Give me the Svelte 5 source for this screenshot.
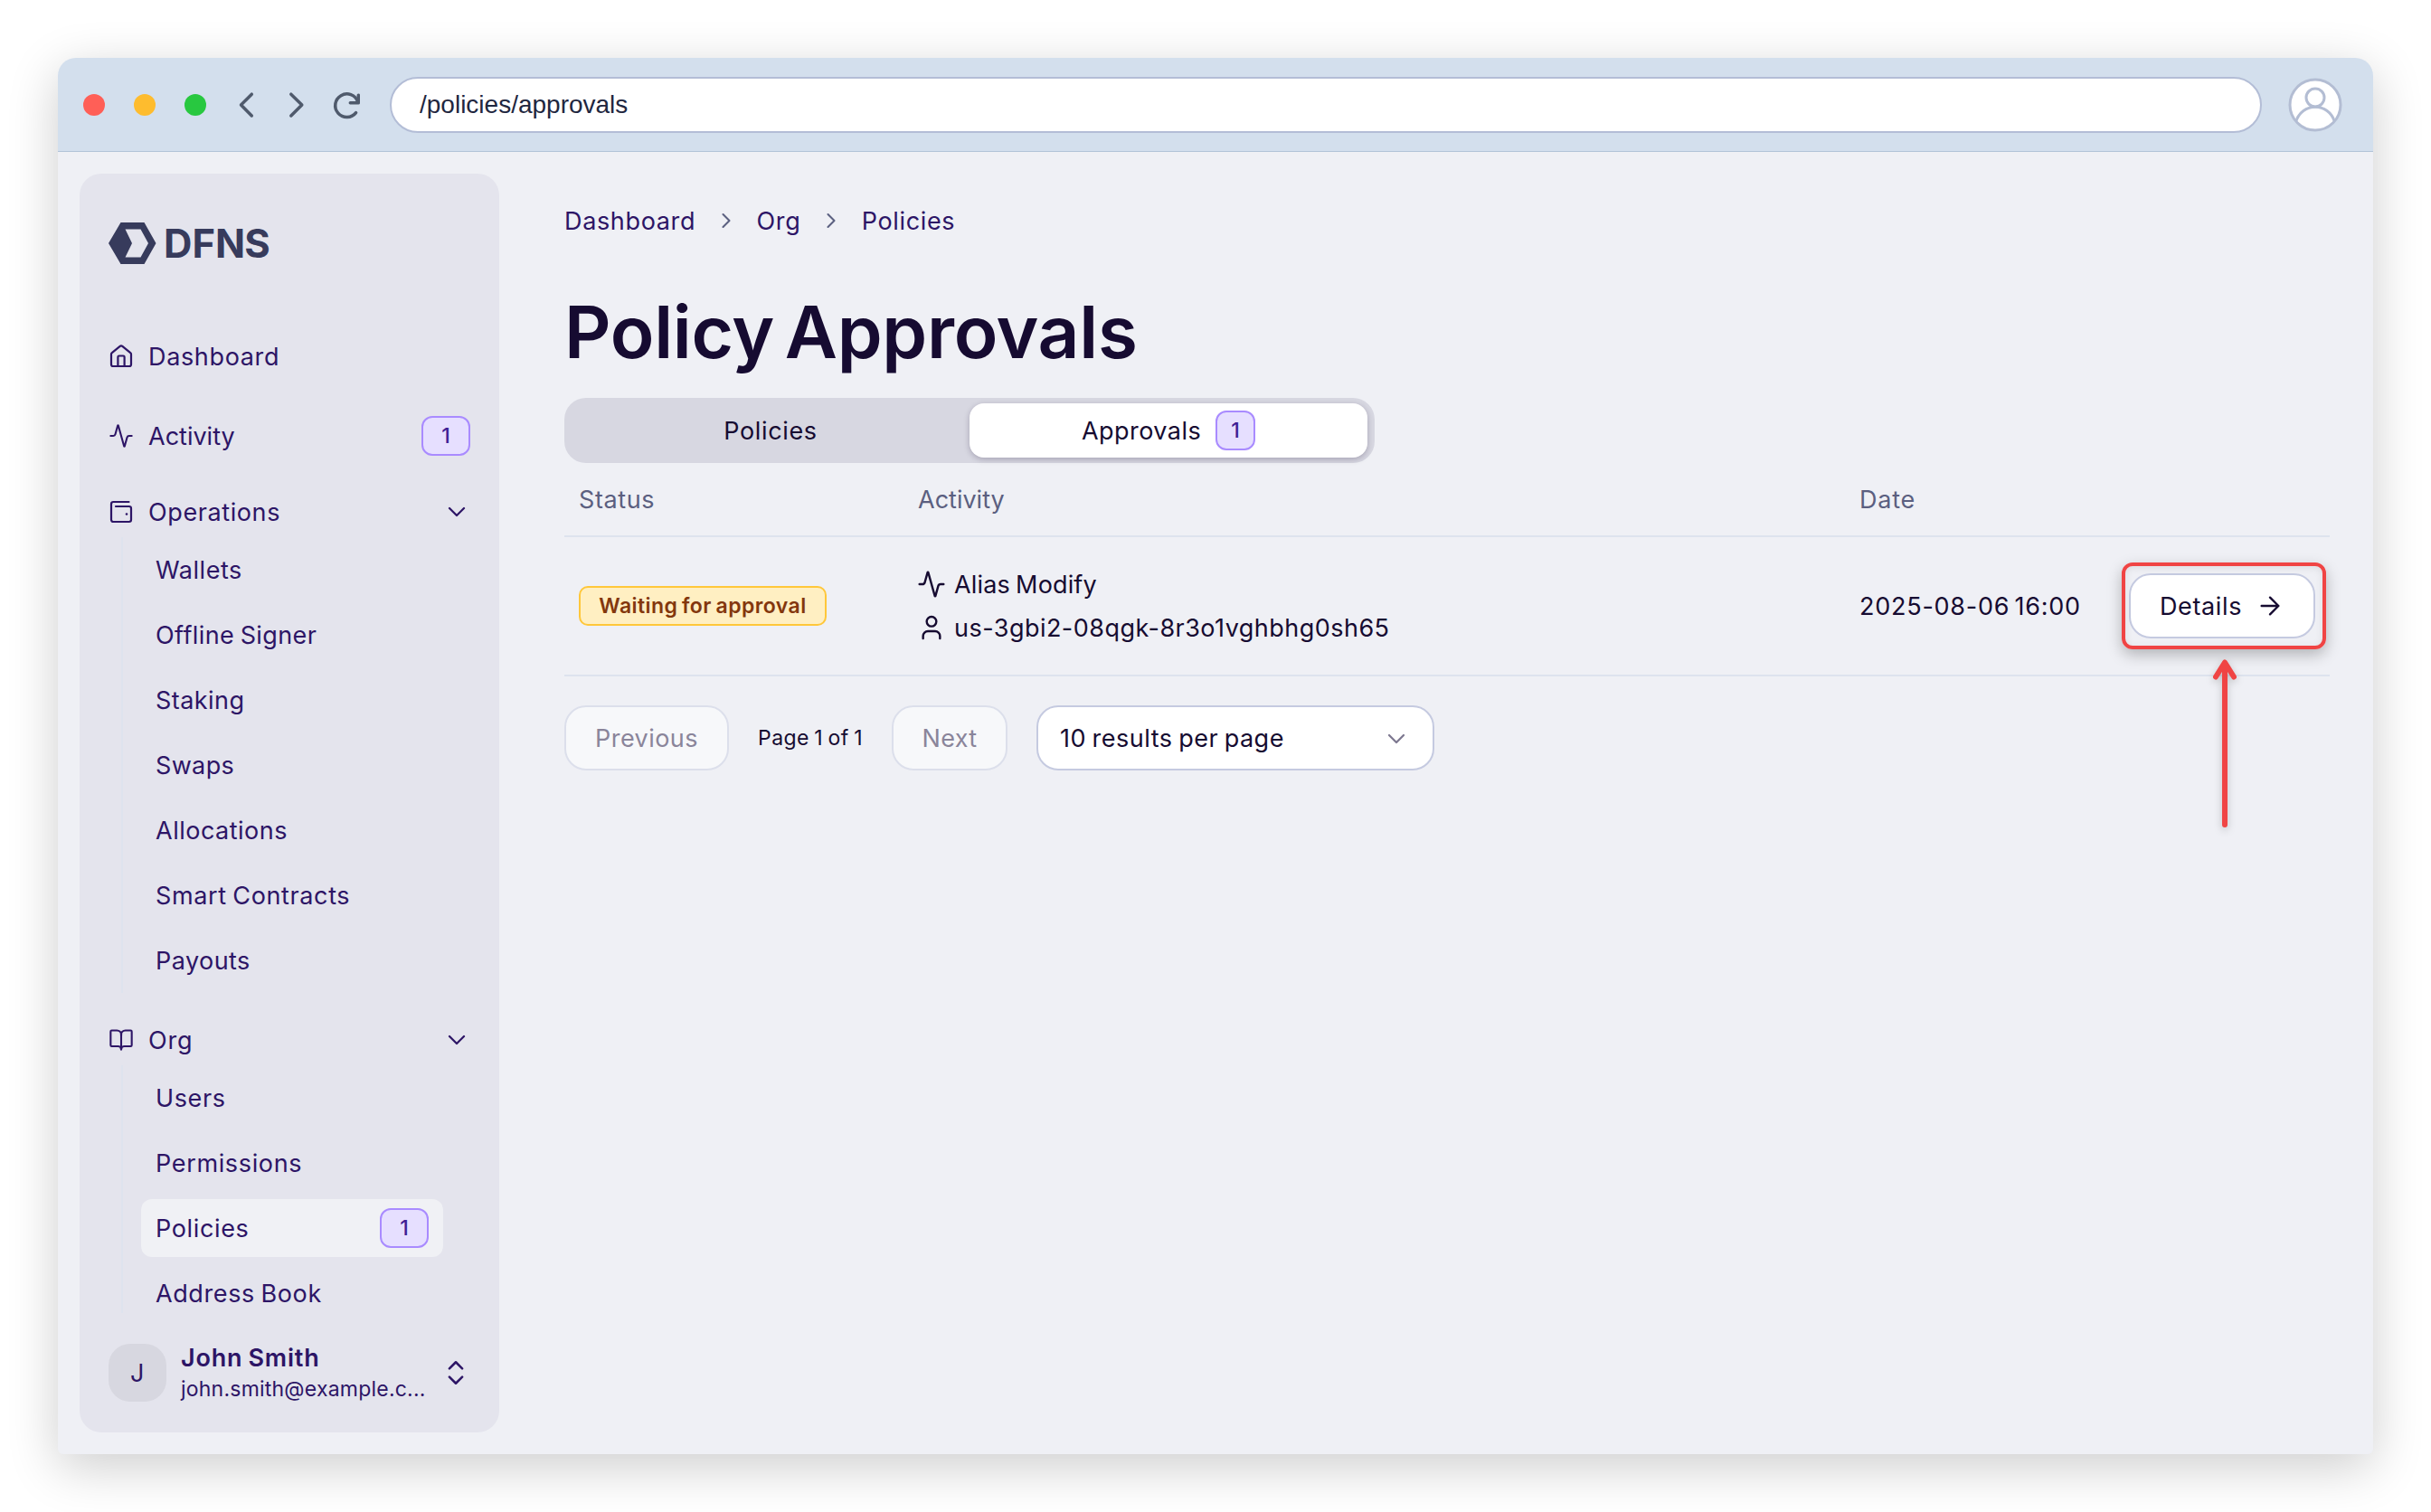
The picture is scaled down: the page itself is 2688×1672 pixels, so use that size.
<script>
	// track = letter spacing in px
	let operations = [
		{ label: "Wallets", track: 0.55 },
		{ label: "Offline Signer", track: 0.4 },
		{ label: "Staking", track: 0.45 },
		{ label: "Swaps", track: 0.35 },
		{ label: "Allocations", track: 0.5 },
		{ label: "Smart Contracts", track: 0.62 },
		{ label: "Payouts", track: 0.45 }
	];
	let org = [
		{ label: "Users", track: 0.6 },
		{ label: "Permissions", track: 0.65 },
		{ label: "Policies", track: 0.65, count: 1, active: true },
		{ label: "Address Book", track: 0.6 }
	];

	let crumbs = ["Dashboard", "Org", "Policies"];

	let approvals = [
		{
			status: "Waiting for approval",
			activity: "Alias Modify",
			user: "us-3gbi2-08qgk-8r3o1vghbhg0sh65",
			date: "2025-08-06 16:00"
		}
	];

	const activityPath = "M22 12h-2.48a2 2 0 0 0-1.93 1.46l-2.35 8.36a.25.25 0 0 1-.48 0L9.24 2.18a.25.25 0 0 0-.48 0l-2.35 8.36A2 2 0 0 1 4.49 12H2";
</script>

{#snippet submenu(list)}
	<ul class="submenu">
		{#each list as item}
			<li class="subitem" class:active={item.active}>
				<span style="letter-spacing: {item.track}px">{item.label}</span>
				{#if item.count}
					<span class="count">{item.count}</span>
				{/if}
			</li>
		{/each}
	</ul>
{/snippet}

{#snippet chevronDown()}
	<svg class="icon chevron" viewBox="0 0 24 24"><path d="m6 9 6 6 6-6" /></svg>
{/snippet}

<div class="window">
	<div class="titlebar">
		<div class="lights">
			<span class="light red"></span>
			<span class="light yellow"></span>
			<span class="light green"></span>
		</div>
		<svg class="browser-icons" viewBox="0 0 140 36">
			<path d="M20.3 6.2 8.5 18l11.8 12" />
			<path d="M63.8 6.2 75.8 18l-12 12" />
			<path d="M135.6 26.6A12.8 12.8 0 1 1 137.6 14.5" />
			<path d="M138.3 7.2v8.6h-9" />
		</svg>
		<div class="url">/policies/approvals</div>
		<svg class="profile" viewBox="0 0 60 60">
			<circle cx="30" cy="30" r="28" fill="#fff" />
			<circle cx="30" cy="22" r="10" />
			<path d="M9 47.6a22 22 0 0 1 42 0" />
		</svg>
	</div>

	<div class="page">
		<aside class="sidebar">
			<svg class="logo" viewBox="0 -10 200 66">
				<path fill-rule="evenodd" d="M13.5 0h26L52.5 23 39.5 46h-26L0 23zM18.5 7.5 26 23 18.5 38.5h17L44 23 35.5 7.5z" />
				<text x="61 92.6 118 150.2" y="38.8">DFNS</text>
			</svg>

			<nav>
				<div class="item">
					<svg class="icon" viewBox="0 0 28 28">
						<path class="px" d="M3 11.8a2 2 0 0 1 .8-1.6l8.9-7.3a2 2 0 0 1 2.6 0l8.9 7.3a2 2 0 0 1 .8 1.6V23a2 2 0 0 1-2 2H5a2 2 0 0 1-2-2z" />
						<path class="px" d="M10.4 25V14.8a1.3 1.3 0 0 1 1.3-1.3h4.6a1.3 1.3 0 0 1 1.3 1.3V25" />
					</svg>
					<span class="name t-dashboard">Dashboard</span>
				</div>
				<div class="item activity">
					<svg class="icon" viewBox="0 0 24 24"><path d={activityPath} /></svg>
					<span class="name t-activity">Activity</span>
					<span class="count">1</span>
				</div>
				<div class="item operations">
					<svg class="icon" viewBox="0 0 28 28">
						<path class="px" d="M22.5 3H5.2A2.2 2.2 0 0 0 3 5.2v17.6A2.2 2.2 0 0 0 5.2 25h17.6a2.2 2.2 0 0 0 2.2-2.2V10.2A2.2 2.2 0 0 0 22.8 8H8" />
						<circle class="dot" cx="20" cy="16.5" r="1.3" />
					</svg>
					<span class="name">Operations</span>
					{@render chevronDown()}
				</div>
				{@render submenu(operations)}
				<div class="item org">
					<svg class="icon" viewBox="0 0 24 24">
						<path d="M12 7v14" />
						<path d="M3 18a1 1 0 0 1-1-1V4a1 1 0 0 1 1-1h5a4 4 0 0 1 4 4 4 4 0 0 1 4-4h5a1 1 0 0 1 1 1v13a1 1 0 0 1-1 1h-6a3 3 0 0 0-3 3 3 3 0 0 0-3-3z" />
					</svg>
					<span class="name t-org">Org</span>
					{@render chevronDown()}
				</div>
				{@render submenu(org)}
			</nav>

			<div class="user">
				<div class="initial">J</div>
				<div class="who">
					<div class="user-name">John Smith</div>
					<div class="email">john.smith@example.c...</div>
				</div>
				<svg class="icon selector" viewBox="0 0 24 24"><path d="m7 15.3 5 5 5-5M7 8.7l5-5 5 5" /></svg>
			</div>
		</aside>

		<main>
			<div class="breadcrumb">
				{#each crumbs as crumb, i}
					{#if i > 0}
						<svg class="icon sep" viewBox="0 0 24 24"><path d="m9 18 6-6-6-6" /></svg>
					{/if}
					<span>{crumb}</span>
				{/each}
			</div>

			<h1>Policy Approvals</h1>

			<div class="tabs">
				<div class="tab">Policies</div>
				<div class="tab selected"><span>Approvals</span> <span class="count small">1</span></div>
			</div>

			<div class="table">
				<div class="row header">
					<div class="cell">Status</div>
					<div class="cell t-activity">Activity</div>
					<div class="cell t-date">Date</div>
				</div>
				{#each approvals as a}
					<div class="row">
						<div class="cell"><span class="status">{a.status}</span></div>
						<div class="cell">
							<div class="line alias">
								<svg class="icon big" viewBox="0 0 24 24"><path d={activityPath} /></svg>
								{a.activity}
							</div>
							<div class="line">
								<svg class="icon big" viewBox="0 0 24 24">
									<path d="M19 21v-2a4 4 0 0 0-4-4H9a4 4 0 0 0-4 4v2" />
									<circle cx="12" cy="7" r="4" />
								</svg>
								{a.user}
							</div>
						</div>
						<div class="cell date">{a.date}</div>
						<div class="cell action">
							<button class="button details">
								Details
								<svg class="icon big" viewBox="0 0 24 24"><path d="M5 12h14M12 5l7 7-7 7" /></svg>
								<span class="highlight"></span>
								<svg class="pointer" viewBox="0 0 40 200">
									<path d="M20 184V6M10 20.5 20 4.5l10 16" />
								</svg>
							</button>
						</div>
					</div>
				{/each}
			</div>

			<div class="pagination">
				<button class="button prev" disabled>Previous</button>
				<span class="page-info">Page 1 of 1</span>
				<button class="button next" disabled>Next</button>
				<div class="button select">
					<span>10 results per page</span>
					{@render chevronDown()}
				</div>
			</div>
		</main>
	</div>
</div>

<style>
	:global(body) {
		background: #fff;
		overflow: hidden;
	}

	.window {
		box-sizing: border-box;
		width: 2560px;
		height: 1544px;
		margin: 64px;
		border-radius: 20px 20px 6px 6px;
		background: #eff0f5;
		box-shadow: 0 14px 56px rgba(0, 0, 0, 0.2);
		font-family: Inter, "Liberation Sans", sans-serif;
		font-size: 27px;
		letter-spacing: 0.6px;
		word-spacing: -1.5px;
		color: #160b31;
		display: flex;
		flex-direction: column;
	}

	.titlebar {
		box-sizing: border-box;
		height: 104px;
		flex: none;
		display: flex;
		align-items: center;
		padding: 0 34px 0 28px;
		background: #d3dfed;
		border-bottom: 1px solid #b2c3d8;
		border-radius: 20px 20px 0 0;
	}

	.lights {
		display: flex;
		gap: 32px;
		margin-right: 30px;
	}

	.light {
		width: 24px;
		height: 24px;
		border-radius: 50%;
	}

	.red { background: #ff5f57; }
	.yellow { background: #febc2e; }
	.green { background: #28c840; }

	.browser-icons {
		width: 140px;
		height: 36px;
		margin-right: 33px;
		fill: none;
		stroke: #4f5a6c;
		stroke-width: 3.5;
		stroke-linecap: round;
		stroke-linejoin: round;
	}

	.url {
		box-sizing: border-box;
		flex: 1;
		height: 62px;
		line-height: 58px;
		padding-left: 31px;
		border: 2px solid #b3bdd6;
		border-radius: 31px;
		background: #fff;
		color: #1f2740;
		font-family: "Liberation Sans", Arial, sans-serif;
		font-size: 28px;
		letter-spacing: 0;
	}

	.profile {
		width: 60px;
		height: 60px;
		margin-left: 29px;
		fill: none;
		stroke: #b3bdd3;
		stroke-width: 3;
	}

	.page {
		flex: 1;
		display: flex;
		padding: 24px 48px 24px 24px;
	}

	.sidebar {
		box-sizing: border-box;
		width: 464px;
		flex: none;
		display: flex;
		flex-direction: column;
		padding: 44px 0 34px;
		border-radius: 24px;
		background: #e4e4ed;
		color: #2d1566;
	}

	.logo {
		width: 200px;
		height: 66px;
		margin: 0 0 64px 32px;
		fill: #373b5c;
	}

	.logo text {
		font-size: 43.5px;
		font-weight: 700;
		letter-spacing: 0;
	}

	nav {
		height: 1086px;
		overflow: hidden;
	}

	.icon {
		width: 28px;
		height: 28px;
		flex: none;
		fill: none;
		stroke: currentColor;
		stroke-width: 1.8;
		stroke-linecap: round;
		stroke-linejoin: round;
	}

	.icon.big {
		width: 32px;
		height: 32px;
	}

	.px {
		stroke-width: 2.2;
	}

	.dot {
		fill: currentColor;
		stroke: none;
	}

	.chevron {
		width: 32px;
		height: 32px;
		stroke-width: 1.7;
	}

	.item {
		display: flex;
		align-items: center;
		height: 56px;
		padding: 0 31px 0 32px;
	}

	.item .name {
		flex: 1;
		margin-left: 16px;
	}

	.activity { margin-top: 32px; padding-right: 32px; }
	.operations { margin-top: 28px; }
	.org { margin-top: 24px; }

	.t-dashboard { letter-spacing: 0.65px; }
	.t-activity { letter-spacing: 0; }
	.t-org, .t-date { letter-spacing: 0.8px; }

	.submenu {
		list-style: none;
		margin: 0 62px 0 46px;
		padding: 0 0 0 20px;
		border-left: 2px solid #dee3ee;
	}

	.subitem {
		display: flex;
		align-items: center;
		justify-content: space-between;
		height: 64px;
		padding: 0 16px;
		border: solid transparent;
		border-width: 4px 0;
		border-radius: 12px / 16px;
		background-clip: padding-box;
	}

	.subitem.active {
		background-color: #f0f1f5;
	}

	.count {
		box-sizing: border-box;
		width: 54px;
		height: 44px;
		line-height: 40px;
		text-align: center;
		border: 2px solid #a98bff;
		border-radius: 12px;
		background: #e6dfff;
		color: #3f1d94;
		font-size: 23px;
		font-weight: 500;
		letter-spacing: 0;
	}

	.count.small {
		width: 44px;
	}

	.user {
		display: flex;
		align-items: center;
		margin-top: auto;
		height: 64px;
		padding: 0 31px 0 32px;
	}

	.initial {
		width: 64px;
		height: 64px;
		line-height: 65px;
		text-align: center;
		border-radius: 24px;
		background: #d7d7e0;
	}

	.who {
		flex: 1;
		margin-left: 16px;
		white-space: nowrap;
	}

	.user-name {
		line-height: 36px;
		font-weight: 600;
		letter-spacing: 0.8px;
	}

	.email {
		line-height: 32px;
		font-size: 23px;
		letter-spacing: 0.22px;
	}

	.selector {
		width: 34px;
		height: 34px;
	}

	main {
		flex: 1;
		margin-left: 72px;
		padding-top: 36px;
	}

	.breadcrumb {
		display: flex;
		align-items: center;
		gap: 19.7px;
		height: 32px;
		letter-spacing: 0.65px;
		color: #2d1566;
	}

	.sep {
		color: #5b6080;
	}

	h1 {
		margin: 59px 0 25px;
		line-height: 96px;
		font-size: 80px;
		font-weight: 600;
		letter-spacing: -0.3px;
		word-spacing: -8px;
	}

	.tabs {
		box-sizing: border-box;
		display: flex;
		width: 896px;
		height: 72px;
		padding: 6px 8px;
		border-radius: 24px;
		background: #d7d7e1;
	}

	.tab {
		flex: 1;
		display: flex;
		align-items: center;
		justify-content: center;
		gap: 16px;
		border-radius: 16px;
		letter-spacing: 0.65px;
	}

	.tab.selected {
		background: #fff;
		box-shadow: 0 2px 6px rgba(22, 11, 49, 0.25);
		letter-spacing: 0.46px;
	}

	.row {
		display: grid;
		grid-template-columns: 375px 1041px 1fr auto;
		align-items: center;
		height: 152px;
		border-bottom: 2px solid #dde3ee;
	}

	.row.header {
		height: 80px;
		color: #5b5f80;
		letter-spacing: 0.6px;
	}

	.header .t-activity { letter-spacing: 0; }
	.header .t-date { letter-spacing: 0.8px; }

	.cell {
		padding: 0 16px;
	}

	.status {
		box-sizing: border-box;
		display: block;
		width: 274px;
		height: 44px;
		line-height: 40px;
		text-align: center;
		border: 2px solid #ffc73a;
		border-radius: 10px;
		background: #ffefc2;
		color: #83370d;
		font-size: 23px;
		font-weight: 600;
		letter-spacing: 0.43px;
	}

	.line {
		display: flex;
		align-items: center;
		gap: 9px;
		height: 48px;
		margin-left: -1px;
		letter-spacing: 0.47px;
	}

	.alias { letter-spacing: 0.15px; }

	.date {
		letter-spacing: 0.75px;
		word-spacing: -3px;
	}

	.button {
		box-sizing: border-box;
		display: flex;
		align-items: center;
		justify-content: center;
		height: 72px;
		padding: 1px 0 0;
		border: 2px solid #c5cae0;
		border-radius: 24px;
		background: #fff;
		color: #160b31;
		font: inherit;
		letter-spacing: 0.45px;
	}

	.button:disabled {
		border-color: #dcdfeb;
		background: #f7f8fa;
		color: #8a859a;
	}

	.details {
		position: relative;
		width: 206px;
		padding: 0;
		gap: 15px;
		letter-spacing: 0.65px;
		word-spacing: 0;
	}

	/* callout drawn over the details button */
	.highlight {
		position: absolute;
		inset: -14px -14px -14px -10px;
		border: 4px solid #f04444;
		border-radius: 12px;
		box-shadow: 0 6px 16px rgba(0, 0, 0, 0.25), inset 0 2px 8px rgba(0, 0, 0, 0.08);
	}

	.pointer {
		position: absolute;
		left: 84px;
		top: 92px;
		width: 40px;
		height: 200px;
		overflow: visible;
		fill: none;
		stroke: #f04444;
		stroke-width: 6;
		stroke-linecap: round;
		stroke-linejoin: round;
		filter: drop-shadow(0 3px 4px rgba(0, 0, 0, 0.2));
	}

	.pagination {
		display: flex;
		margin-top: 32px;
		line-height: 72px;
	}

	.prev { width: 182px; }
	.next { width: 128px; letter-spacing: 0.33px; }

	.page-info {
		width: 180px;
		text-align: center;
		font-size: 23px;
		letter-spacing: 0.45px;
	}

	.select {
		width: 440px;
		margin-left: 32px;
		padding: 1px 24px 0 24px;
		justify-content: space-between;
		letter-spacing: 0.5px;
	}

	.select .chevron {
		color: #7d7890;
	}
</style>
